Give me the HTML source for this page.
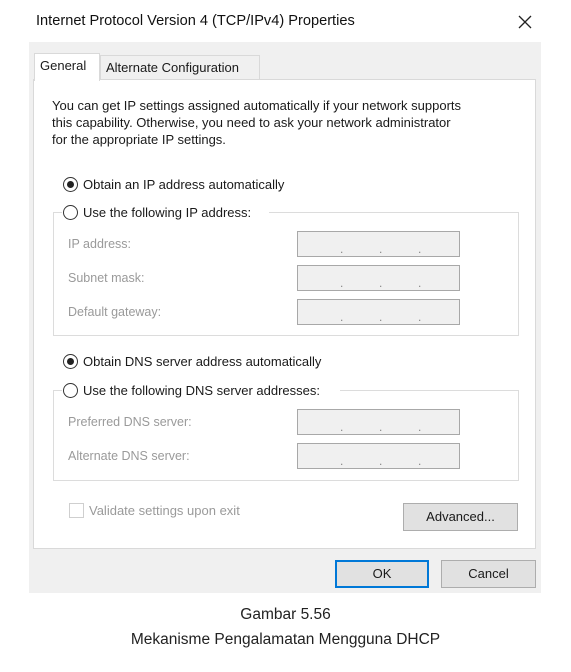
<!DOCTYPE html>
<html><head><meta charset="utf-8"><style>
*{margin:0;padding:0;box-sizing:border-box}
body{width:571px;height:672px;background:#fff;position:relative;overflow:hidden;font-family:"Liberation Sans",sans-serif;font-size:12.5px;color:#1a1a1a}
.a{position:absolute;white-space:nowrap}
.g{color:#9a9a9a}
.inp{position:absolute;width:163px;height:26px;border:1px solid #a8a8a8;background:#f0f0f0}
.inp span{position:absolute;top:10px;font-size:12px;color:#888}
.grp{position:absolute;border:1px solid #dcdcdc}
.rad{position:absolute;width:15px;height:15px;border:1px solid #333;border-radius:50%;background:#fff}
.rad.on::after{content:"";position:absolute;left:3px;top:3px;width:7px;height:7px;border-radius:50%;background:#222}
.btn{position:absolute;border:1px solid #adadad;background:#e1e1e1;text-align:center;font-size:13px}
</style></head><body>
<div class="a" style="left:36px;top:13px;font-size:14.6px;color:#111">Internet Protocol Version 4 (TCP/IPv4) Properties</div>
<svg class="a" style="left:518px;top:15px" width="14" height="14"><path d="M1 1L13 13M13 1L1 13" stroke="#222" stroke-width="1.3"/></svg>
<div class="a" style="left:29px;top:42px;width:512px;height:551px;background:#f0f0f0"></div>
<div class="a" style="left:100px;top:55px;width:160px;height:25px;background:#f0f0f0;border:1px solid #d9d9d9"></div>
<div class="a" style="left:106px;top:60px;font-size:13px">Alternate Configuration</div>
<div class="a" style="left:33px;top:79px;width:503px;height:470px;background:#fff;border:1px solid #d9d9d9"></div>
<div class="a" style="left:34px;top:53px;width:66px;height:28px;background:#fff;border:1px solid #d9d9d9;border-bottom:none"></div>
<div class="a" style="left:40px;top:58px;font-size:13px">General</div>
<div class="a" style="left:52px;top:97px;line-height:17px;font-size:13px">You can get IP settings assigned automatically if your network supports<br>this capability. Otherwise, you need to ask your network administrator<br>for the appropriate IP settings.</div>
<div class="rad on" style="left:63px;top:177px"></div>
<div class="a" style="left:83px;top:177px;font-size:13px">Obtain an IP address automatically</div>
<div class="grp" style="left:53px;top:212px;width:466px;height:124px"></div>
<div class="a" style="left:62px;top:203px;width:207px;height:18px;background:#fff"></div>
<div class="rad" style="left:63px;top:205px"></div>
<div class="a" style="left:83px;top:205px;font-size:13px">Use the following IP address:</div>
<div class="a g" style="left:68px;top:237px">IP address:</div>
<div class="a g" style="left:68px;top:271px">Subnet mask:</div>
<div class="a g" style="left:68px;top:305px">Default gateway:</div>
<div class="inp" style="left:297px;top:231px"><span style="left:42px">.</span><span style="left:81px">.</span><span style="left:120px">.</span></div>
<div class="inp" style="left:297px;top:265px"><span style="left:42px">.</span><span style="left:81px">.</span><span style="left:120px">.</span></div>
<div class="inp" style="left:297px;top:299px"><span style="left:42px">.</span><span style="left:81px">.</span><span style="left:120px">.</span></div>
<div class="rad on" style="left:63px;top:354px"></div>
<div class="a" style="left:83px;top:354px;font-size:13px">Obtain DNS server address automatically</div>
<div class="grp" style="left:53px;top:390px;width:466px;height:91px"></div>
<div class="a" style="left:62px;top:380px;width:278px;height:18px;background:#fff"></div>
<div class="rad" style="left:63px;top:383px"></div>
<div class="a" style="left:83px;top:383px;font-size:13px">Use the following DNS server addresses:</div>
<div class="a g" style="left:68px;top:415px">Preferred DNS server:</div>
<div class="a g" style="left:68px;top:449px">Alternate DNS server:</div>
<div class="inp" style="left:297px;top:409px"><span style="left:42px">.</span><span style="left:81px">.</span><span style="left:120px">.</span></div>
<div class="inp" style="left:297px;top:443px"><span style="left:42px">.</span><span style="left:81px">.</span><span style="left:120px">.</span></div>
<div class="a" style="left:69px;top:503px;width:15px;height:15px;border:1px solid #cfcfcf"></div>
<div class="a g" style="left:89px;top:503px;font-size:13px">Validate settings upon exit</div>
<div class="btn" style="left:403px;top:503px;width:115px;height:28px;line-height:26px">Advanced...</div>
<div class="btn" style="left:335px;top:560px;width:94px;height:28px;line-height:24px;border:2px solid #0078d7">OK</div>
<div class="btn" style="left:441px;top:560px;width:95px;height:28px;line-height:26px">Cancel</div>
<div class="a" style="left:0;width:571px;text-align:center;top:606px;font-size:15.5px;color:#222">Gambar 5.56</div>
<div class="a" style="left:0;width:571px;text-align:center;top:631px;font-size:15.5px;color:#222">Mekanisme Pengalamatan Mengguna DHCP</div>
</body></html>
